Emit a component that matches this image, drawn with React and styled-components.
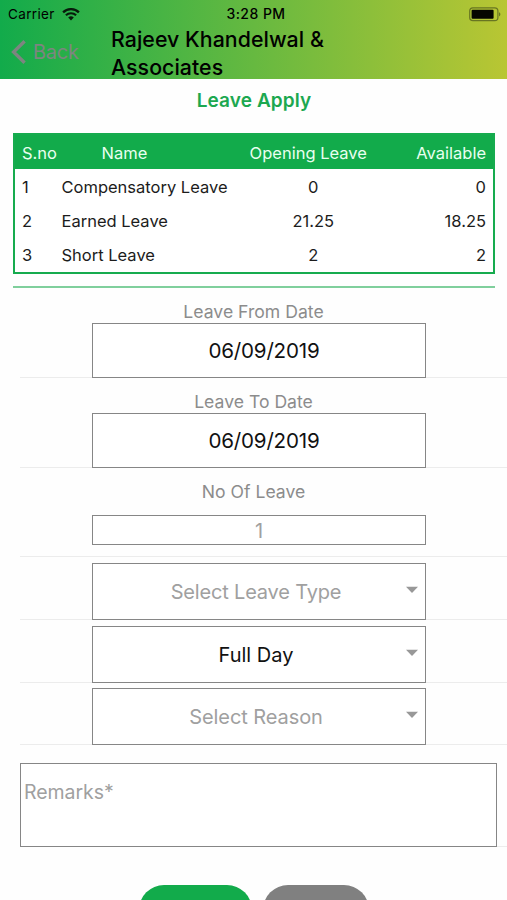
import React from "react";
import styled, { createGlobalStyle } from "styled-components";

const GlobalStyle = createGlobalStyle`
  * { box-sizing: border-box; }
  body {
    margin: 0;
    overflow: hidden;
    background: #fff;
    font-family: Inter, "Liberation Sans", sans-serif;
    color: #000;
  }
`;

const Screen = styled.main`
  width: 507px;
  height: 900px;
  overflow: hidden;
  display: flex;
  flex-direction: column;
  background: #fefefe;
`;

const Header = styled.header`
  flex: none;
  height: 79px;
  background: linear-gradient(90deg, #12ab4b 0%, #66b940 50%, #b9c633 100%);
`;

const StatusBar = styled.div`
  height: 26px;
  padding: 0 6px 0 8px;
  display: grid;
  grid-template-columns: 1fr auto 1fr;
  align-items: center;
  font-size: 13.5px;
  line-height: 28px;
`;

const Carrier = styled.div`
  display: flex;
  align-items: center;
  gap: 7px;
  letter-spacing: 0.35px;
`;

const Clock = styled.div`
  font-weight: 500;
  font-size: 14px;
  letter-spacing: 0.45px;
  padding-left: 3px;
`;

const Battery = styled.svg`
  justify-self: end;
`;

const NavBar = styled.div`
  height: 53px;
  display: flex;
  align-items: center;
`;

const BackButton = styled.div`
  width: 111px;
  height: 51px;
  align-self: flex-start;
  padding-left: 11px;
  display: flex;
  align-items: center;
  gap: 7px;
  color: #7d8580;
  font-size: 20px;
  letter-spacing: -0.25px;
`;

const Company = styled.h1`
  margin: 0;
  width: 240px;
  font-size: 21.3px;
  font-weight: 500;
  line-height: 28px;
  letter-spacing: 0.06px;
`;

const PageTitle = styled.h2`
  margin: 0;
  height: 54px;
  padding-left: 1px;
  flex: none;
  text-align: center;
  font-size: 19px;
  font-weight: 600;
  line-height: 44px;
  letter-spacing: 0.1px;
  color: #1ca850;
`;

const Table = styled.section`
  flex: none;
  margin: 0 12px 0 13px;
  height: 141px;
  border: 2px solid #16ab4e;
  background: #fff;
`;

const TableRow = styled.div`
  height: 34px;
  padding: 2px 7px 0;
  display: grid;
  grid-template-columns: 39.5px 172px 1fr 97px;
  align-items: center;
  font-size: 16.5px;
  color: ${(p) => (p.$head ? "#e9fff0" : "#1c1c1c")};
  background: ${(p) => (p.$head ? "#12ab4b" : "transparent")};
`;

const Cell = styled.span`
  white-space: nowrap;
  text-align: ${(p) => p.$align || "left"};
  padding-left: ${(p) => p.$indent || 0}px;
  padding-right: ${(p) => p.$inset || 0}px;
`;

const Rule = styled.div`
  flex: none;
  height: 2px;
  margin: 12px 12px 0 13px;
  background: #7fcf9c;
`;

const Form = styled.form`
  flex: none;
  padding-left: 20px;
`;

const FormRow = styled.div`
  height: ${(p) => p.$height}px;
  padding: 0 81px ${(p) => p.$below || 0}px 72px;
  border-bottom: 1px solid #ececec;
  display: flex;
  flex-direction: column;
  justify-content: flex-end;
`;

const Label = styled.label`
  height: 22px;
  margin-bottom: ${(p) => p.$gap || 0}px;
  padding-right: 11px;
  text-align: center;
  font-size: 17.6px;
  line-height: 22px;
  color: #8c8c8c;
`;

const Field = styled.div`
  flex: none;
  height: ${(p) => p.$height}px;
  margin-bottom: -1px;
  border: 1px solid #868686;
  background: #fff;
  display: flex;
  align-items: center;
  justify-content: center;
  position: relative;
  padding: ${(p) => p.$drop || 0}px ${(p) => p.$shift || 0}px 0 ${(p) => p.$push || 0}px;
  font-size: ${(p) => p.$size || 20}px;
  letter-spacing: ${(p) => p.$track || 0}px;
  color: ${(p) => (p.$muted ? "#a0a0a0" : "#111")};
`;

const Caret = styled.svg`
  position: absolute;
  right: 7px;
  top: 22px;
`;

const RemarksRow = styled.div`
  height: 102px;
  padding: 18px 10px 0 0;
  border-bottom: 1px solid #ececec;
`;

const Remarks = styled.div`
  height: 84px;
  border: 1px solid #868686;
  background: #fff;
  padding: 15px 3px;
  font-size: 19.5px;
  line-height: 26px;
  letter-spacing: -0.05px;
  color: #a0a0a0;
`;

const Actions = styled.div`
  flex: none;
  padding: 38px 0 0 139px;
  display: flex;
  gap: 11px;
`;

const Action = styled.div`
  width: ${(p) => p.$width}px;
  height: 50px;
  border-radius: 25px;
  background: ${(p) => p.$color};
`;

const leaves = [
  ["1", "Compensatory Leave", "0", "0"],
  ["2", "Earned Leave", "21.25", "18.25"],
  ["3", "Short Leave", "2", "2"],
];

function WifiIcon() {
  return (
    <svg width="18" height="13" viewBox="0 0 18 13" fill="none" stroke="#071b0b">
      <path d="M1.1 4.4a11.2 11.2 0 0 1 15.8 0" strokeWidth="2.3" />
      <path d="M3.9 7.3a7.2 7.2 0 0 1 10.2 0" strokeWidth="2.1" />
      <path d="M9 12.5 6.2 9.6a4 4 0 0 1 5.6 0Z" fill="#071b0b" stroke="none" />
    </svg>
  );
}

function BatteryIcon() {
  return (
    <Battery width="32" height="15" viewBox="0 0 32 15">
      <rect x="0.7" y="0.9" width="28.2" height="12.8" rx="3.2" fill="none" stroke="#687522" strokeWidth="1.2" />
      <rect x="2.6" y="2.8" width="22" height="9" rx="1" fill="#050600" />
      <path d="M30 5.2c1.9.7 1.9 3.5 0 4.2Z" fill="#687522" />
    </Battery>
  );
}

function SelectField({ children, ...rest }) {
  return (
    <Field $height={57} $shift={6} {...rest}>
      {children}
      <Caret width="12" height="8" viewBox="0 0 12 8">
        <path d="M0 .8h12L6 7Z" fill="#989898" />
      </Caret>
    </Field>
  );
}

export default function App() {
  return (
    <Screen>
      <GlobalStyle />
      <Header>
        <StatusBar>
          <Carrier>
            <span>Carrier</span>
            <WifiIcon />
          </Carrier>
          <Clock>3:28 PM</Clock>
          <BatteryIcon />
        </StatusBar>
        <NavBar>
          <BackButton>
            <svg width="15" height="24" viewBox="0 0 15 24" fill="none">
              <path d="M13.6 1.2 2.6 12l11 10.8" stroke="#7d8580" strokeWidth="3.4" />
            </svg>
            <span>Back</span>
          </BackButton>
          <Company>Rajeev Khandelwal &amp; Associates</Company>
        </NavBar>
      </Header>

      <PageTitle>Leave Apply</PageTitle>

      <Table>
        <TableRow $head>
          <Cell>S.no</Cell>
          <Cell $indent={40}>Name</Cell>
          <Cell $align="center" $inset={6}>Opening Leave</Cell>
          <Cell $align="right">Available</Cell>
        </TableRow>
        {leaves.map(([no, name, opening, available]) => (
          <TableRow key={no}>
            <Cell>{no}</Cell>
            <Cell>{name}</Cell>
            <Cell $align="center" $indent={4}>{opening}</Cell>
            <Cell $align="right">{available}</Cell>
          </TableRow>
        ))}
      </Table>
      <Rule />

      <Form>
        <FormRow $height={90}>
          <Label>Leave From Date</Label>
          <Field $height={55} $push={10} $size={20.6} $track={-0.2}>06/09/2019</Field>
        </FormRow>
        <FormRow $height={90}>
          <Label>Leave To Date</Label>
          <Field $height={55} $push={10} $size={20.6} $track={-0.2}>06/09/2019</Field>
        </FormRow>
        <FormRow $height={89} $below={12}>
          <Label $gap={12}>No Of Leave</Label>
          <Field $height={30} $muted $drop={1}>1</Field>
        </FormRow>
        <FormRow $height={63}>
          <SelectField $track={-0.18} $drop={1} $muted>Select Leave Type</SelectField>
        </FormRow>
        <FormRow $height={63}>
          <SelectField>Full Day</SelectField>
        </FormRow>
        <FormRow $height={62}>
          <SelectField $track={-0.08} $drop={1} $muted>Select Reason</SelectField>
        </FormRow>
        <RemarksRow>
          <Remarks>Remarks*</Remarks>
        </RemarksRow>
      </Form>

      <Actions>
        <Action $width={113} $color="#12ab4b" />
        <Action $width={106} $color="#808080" />
      </Actions>
    </Screen>
  );
}
